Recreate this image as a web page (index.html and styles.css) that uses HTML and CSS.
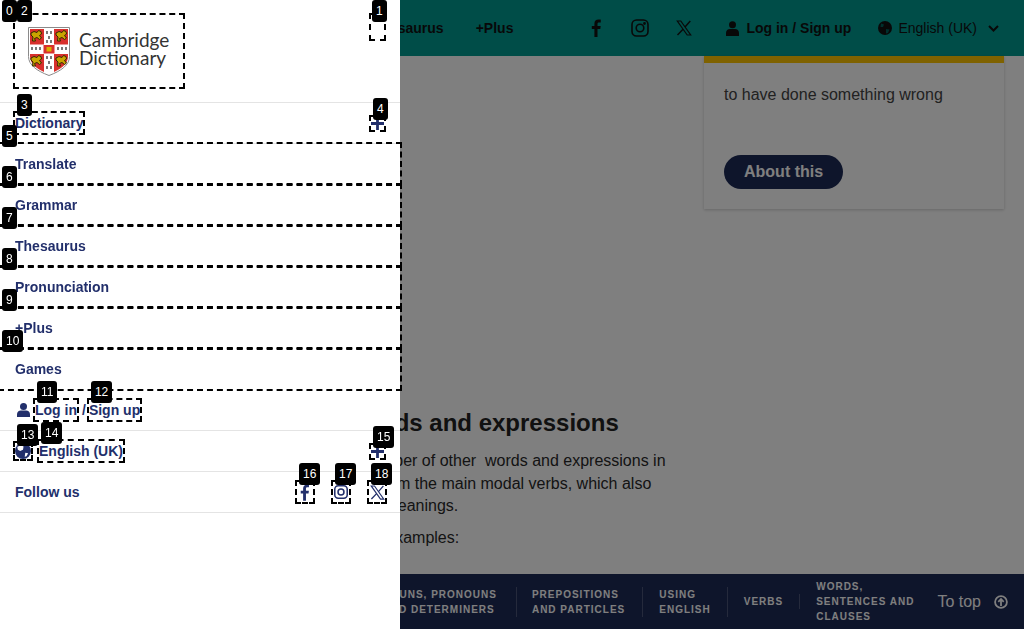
FILE: index.html
```html
<!DOCTYPE html>
<html lang="en">
<head>
    <meta charset="UTF-8">
    <meta name="viewport" content="width=device-width, initial-scale=1.0">
    <title>Cambridge Dictionary</title>
    <link rel="stylesheet" href="styles.css">
</head>
<body>
    <header class="topbar">
        <nav class="topnav">
            <a href="#">Dictionary</a>
            <a href="#">Translate</a>
            <a href="#">Grammar</a>
            <a href="#">Thesaurus</a>
            <a href="#">+Plus</a>
        </nav>
        <div class="social">
            <a href="#"><svg width="12" height="18" viewBox="0 0 12 18"><path d="M3.4 18V10H.8V7h2.6V4.7C3.4 2 5 .6 7.4.6c1.1 0 2.1.1 2.4.1v2.7H8.1c-1.3 0-1.6.6-1.6 1.5V7h3.2l-.4 3H6.5v8z"/></svg></a>
            <a href="#"><svg class="line" width="18" height="18" viewBox="0 0 18 18" stroke="currentColor" stroke-width="1.6"><rect x="1" y="1" width="16" height="16" rx="4.5"/><circle cx="9" cy="9" r="3.8"/><circle cx="13.5" cy="4.5" r=".6" fill="currentColor"/></svg></a>
            <a class="social-x" href="#"><svg class="line" width="16" height="16" viewBox="0 0 16 16" stroke="currentColor"><path d="M1.3 1h3.5l9.9 14h-3.5z" stroke-width="1.2"/><path d="M14.3 1 9 7M7 9.2 1.500 15" stroke-width="1.4"/></svg></a>
        </div>
        <div class="account">
            <svg width="13" height="15" viewBox="0 0 13 15"><circle cx="6.5" cy="3.8" r="3.5"/><path d="M0 15v-3.2C0 9.5 1.8 8 3.8 8h5.4C11.2 8 13 9.5 13 11.8V15z"/></svg>
            <span>Log in / Sign up</span>
        </div>
        <div class="language">
            <svg width="14" height="14" viewBox="0 0 14 14"><circle cx="7" cy="7" r="7"/><path d="M3 2.5 6 3.5 5 6 2.5 6zM8 8l3.5.5-1.500 3.500-2 .5z" fill="#00605a"/></svg>
            <span>English (UK)</span>
            <svg class="chevron line" width="11" height="7" viewBox="0 0 11 7" stroke="currentColor" stroke-width="2"><path d="M1 1l4.5 4.5L10 1"/></svg>
        </div>
    </header>

    <main class="content">
        <article class="article">
            <h2>Modal words and expressions</h2>
            <p>There are a number of other &nbsp;words and expressions in<br>English, apart from the main modal verbs, which also<br>express modal meanings.</p>
            <p>Here are some examples:</p>
        </article>
        <aside class="card">
            <p>to have done something wrong</p>
            <a class="card-btn" href="#">About this</a>
        </aside>
    </main>

    <footer class="gramnav">
        <a class="gram-item" href="#">Nouns, pronouns<br>and determiners</a>
        <a class="gram-item" href="#">Prepositions<br>and particles</a>
        <a class="gram-item" href="#">Using<br>English</a>
        <a class="gram-item" href="#">Verbs</a>
        <a class="gram-item" href="#">Words,<br>sentences and<br>clauses</a>
        <a class="totop" href="#">To top
            <svg class="line" width="14" height="14" viewBox="0 0 14 14" stroke="currentColor" stroke-width="1.8"><circle cx="7" cy="7" r="5.9"/><path d="M7 11V4M4.3 6.8 7 4l2.7 2.800"/></svg>
        </a>
    </footer>

    <div class="backdrop"></div>

    <section class="drawer">
        <span class="num num-top">0</span>
        <div class="drawer-head">
            <a class="logo mark" href="#">
                <span class="num num-top">2</span>
                <svg class="shield" width="42" height="49" viewBox="0 0 42 49">
                    <defs>
                        <path id="lion" d="M1 5 4 3.500l3 1 1.500-2 2.500 1 .5 2.500-2 1.500 2 2.500-2 1.500-2.500-2-2.500 1 1 2.500H2.500l.5-4-2-2z" fill="#c9a400" stroke="#332a00" stroke-width="1"/>
                    </defs>
                    <path d="M.5.5h41v29C41.5 38 33 44 21 48.5 9 44 .5 38 .5 29.500z" fill="#fff" stroke="#8a8a8a"/>
                    <path d="M2 2h14v15.500H2zM26 2h14v15.500H26z" fill="#d8302c"/>
                    <path d="M2 27h14v18C8 41.500 2 36 2 29.500zM26 27h14v2.500C40 36 34 41.500 26 45z" fill="#d8302c"/>
                    <path d="M15.5 18h11v8.500h-11z" fill="#d8302c"/>
                    <path d="M18.5 20h5v4.500h-5z" fill="#d9b000"/>
                    <use href="#lion" x="2" y="1"/>
                    <use href="#lion" x="27" y="1"/>
                    <use href="#lion" x="2" y="26"/>
                    <use href="#lion" x="27" y="26"/>
                    <path d="M19 4v3M23 4v3M21 9v3M19 13v3M23 13v3M19 29v3M23 29v3M21 34v3M19 39v3M23 39v3M4 20v3M8 20v3M12 20v3M30 20v3M34 20v3M38 20v3" stroke="#333" stroke-width="1.3"/>
                </svg>
                <span class="logo-text">Cambridge<br>Dictionary</span>
            </a>
            <button class="close mark"><span class="num num-top">1</span></button>
        </div>

        <div class="row row-split">
            <a class="mark" href="#"><span class="num">3</span>Dictionary</a>
            <a class="plus mark" href="#"><span class="num">4</span><svg width="13" height="13" viewBox="0 0 14 14"><path d="M0 5.500h14v3H0zM5.500 0h3v14h-3z"/></svg></a>
        </div>
        <a class="row-link mark" href="#"><span class="num">5</span>Translate</a>
        <a class="row-link mark" href="#"><span class="num">6</span>Grammar</a>
        <a class="row-link mark" href="#"><span class="num">7</span>Thesaurus</a>
        <a class="row-link mark" href="#"><span class="num">8</span>Pronunciation</a>
        <a class="row-link mark" href="#"><span class="num">9</span>+Plus</a>
        <a class="row-link mark" href="#"><span class="num">10</span>Games</a>

        <div class="row row-login">
            <svg class="user" width="13" height="14" viewBox="0 0 13 14"><circle cx="6.5" cy="3.5" r="3.5"/><path d="M0 14v-2.800C0 9 1.800 7.500 3.800 7.500h5.400c2 0 3.800 1.500 3.800 3.700V14z"/></svg>
            <a class="mark" href="#"><span class="num">11</span>Log in</a>
            <span class="slash">/</span>
            <a class="mark" href="#"><span class="num">12</span>Sign up</a>
        </div>
        <div class="row row-split">
            <div class="lang-left">
                <a class="globe mark" href="#"><span class="num">13</span><svg width="16" height="16" viewBox="0 0 14 14"><circle cx="7" cy="7" r="7"/><path d="M2 3.500 5 1.800 7.500 3 7 6 4.500 7 2.500 6zM9 8.500l2.500.5-1.500 2.500-1.500.5z" fill="#fff"/></svg></a>
                <a class="mark" href="#"><span class="num">14</span>English (UK)</a>
            </div>
            <a class="plus mark" href="#"><span class="num">15</span><svg width="13" height="13" viewBox="0 0 14 14"><path d="M0 5.500h14v3H0zM5.500 0h3v14h-3z"/></svg></a>
        </div>
        <div class="row row-split">
            <span>Follow us</span>
            <div class="follow">
                <a class="mark" href="#"><span class="num">16</span><svg width="11" height="17" viewBox="0 0 12 18"><path d="M3.400 18V10H.8V7h2.600V4.700C3.400 2 5 .6 7.400.6c1.100 0 2.100.1 2.400.1v2.700H8.100c-1.300 0-1.600.6-1.600 1.500V7h3.200l-.4 3H6.500v8z"/></svg></a>
                <a class="mark" href="#"><span class="num">17</span><svg class="line" width="14" height="14" viewBox="0 0 18 18" stroke="currentColor" stroke-width="2"><rect x="1" y="1" width="16" height="16" rx="4.500"/><circle cx="9" cy="9" r="3.800"/></svg></a>
                <a class="mark" href="#"><span class="num">18</span><svg class="line" width="15" height="15" viewBox="0 0 16 16" stroke="currentColor"><path d="M1.300 1h3.500l9.900 14h-3.500z" stroke-width="1.200"/><path d="M14.300 1 9 7M7 9.200 1.500 15" stroke-width="1.400"/></svg></a>
            </div>
        </div>
    </section>
</body>
</html>
```

FILE: styles.css
```css
* {
    box-sizing: border-box;
}

body {
    font-family: 'Liberation Sans', Arial, sans-serif;
    font-size: 16px;
    background-color: #fff;
    color: #292929;
    margin: 0;
    height: 629px;
    overflow: hidden;
    display: flex;
    flex-direction: column;
}

a {
    color: inherit;
    text-decoration: none;
}

svg {
    display: block;
    fill: currentColor;
}

svg.line {
    fill: none;
}

/* top bar, under the backdrop */
.topbar {
    height: 56px;
    flex-shrink: 0;
    background-color: #009a90;
    color: #111;
    font-size: 14px;
    display: flex;
    align-items: center;
    justify-content: flex-end;
    padding-right: 25px;
}

.topnav {
    display: flex;
    gap: 32px;
    font-weight: bold;
    margin-right: 78px;
}

.social {
    display: flex;
    align-items: center;
    gap: 28px;
    margin-right: 34px;
}

.social-x {
    margin-left: -1px;
}

.account {
    display: flex;
    align-items: center;
    gap: 7px;
    font-weight: bold;
    margin-right: 27px;
}

.language {
    display: flex;
    align-items: center;
    gap: 6px;
}

.chevron {
    margin-left: 5px;
}

/* page content */
.content {
    flex: 1;
    min-height: 0;
    display: flex;
    align-items: flex-start;
    padding-right: 20px;
}

.article {
    width: 413px;
    margin-left: 276px;
    padding-top: 352px;
    font-size: 16px;
    line-height: 22.6px;
}

.article h2 {
    font-size: 24px;
    line-height: 30px;
    color: #222;
    margin: 0 0 12px;
}

.article p {
    margin: 0 0 9px;
    white-space: nowrap;
}

.card {
    width: 300px;
    height: 153px;
    margin-left: 15px;
    border-top: 7px solid #fec400;
    padding: 22px 20px 0;
    box-shadow: 0 1px 3px rgba(0, 0, 0, 0.2);
}

.card p {
    margin: 0 0 50px;
    line-height: 20px;
    color: #444;
}

.card-btn {
    display: inline-block;
    height: 34px;
    line-height: 34px;
    padding: 0 20px;
    border-radius: 17px;
    background-color: #1d2a57;
    color: #fff;
    font-weight: bold;
}

/* grammar bar at the bottom */
.gramnav {
    height: 55px;
    flex-shrink: 0;
    background-color: #1d2a57;
    color: #fff;
    display: flex;
    align-items: center;
    justify-content: flex-end;
    padding-right: 16px;
}

.gram-item {
    font-size: 10px;
    font-weight: bold;
    line-height: 15px;
    letter-spacing: 1px;
    text-transform: uppercase;
    padding: 0 16px;
    border-right: 1px solid rgba(255, 255, 255, 0.2);
}

.gram-item:nth-child(1) {
    padding-right: 19px;
}

.gram-item:nth-child(2) {
    padding: 0 17px 0 15px;
}

.gram-item:nth-child(5) {
    border-right: none;
}

.totop {
    display: flex;
    align-items: center;
    gap: 13px;
    margin-left: 7px;
    font-size: 16px;
}

.backdrop {
    position: fixed;
    inset: 0;
    background-color: rgba(0, 0, 0, 0.5);
}

/* drawer over the page */
.drawer {
    position: fixed;
    top: 0;
    left: 0;
    bottom: 0;
    width: 400px;
    background-color: #fff;
    color: #222f6b;
    font-size: 14px;
    font-weight: bold;
    line-height: 20px;
}

.drawer-head {
    height: 103px;
    border-bottom: 1px solid #e4e4e4;
    padding: 15px 16px 0 15px;
    display: flex;
    justify-content: space-between;
    align-items: flex-start;
}

.logo {
    width: 168px;
    height: 72px;
    display: flex;
    align-items: center;
    gap: 9px;
    padding-left: 13px;
}

.shield {
    flex-shrink: 0;
}

.logo-text {
    font-family: Lato, sans-serif;
    font-weight: normal;
    font-size: 19px;
    line-height: 18px;
    color: #333;
    margin-bottom: 5px;
}

.close {
    width: 13px;
    height: 24px;
    padding: 0;
    border: none;
    background: none;
}

.row {
    height: 41px;
    border-bottom: 1px solid #e4e4e4;
    padding: 0 15px;
    display: flex;
    align-items: center;
}

.row-split {
    justify-content: space-between;
}

.row-link {
    display: block;
    height: 40px;
    margin-bottom: 1px;
    padding: 10px 15px;
}

.plus {
    width: 13px;
    height: 13px;
    margin-right: 1px;
}

.row-login {
    padding-left: 17px;
}

.user {
    margin-right: 5px;
}

.slash {
    margin: 0 3px 0 5px;
}

.lang-left {
    display: flex;
    align-items: center;
    gap: 8px;
}

.globe {
    width: 16px;
    height: 16px;
}

.follow {
    display: flex;
    gap: 20px;
}

.follow a {
    width: 16px;
    height: 20px;
    display: flex;
    align-items: center;
    justify-content: center;
}

/* annotation boxes and their number tags */
.mark {
    position: relative;
    outline: 2px dashed #000;
}

.num {
    position: absolute;
    top: -19px;
    left: 2px;
    height: 22px;
    padding: 0 4px;
    border-radius: 3px;
    background-color: #000;
    color: #fff;
    font-size: 12px;
    font-weight: normal;
    line-height: 22px;
    z-index: 2;
}

.drawer > .num {
    top: 0;
}

.mark > .num-top {
    top: -15px;
}

.close > .num {
    left: 1px;
}
```
